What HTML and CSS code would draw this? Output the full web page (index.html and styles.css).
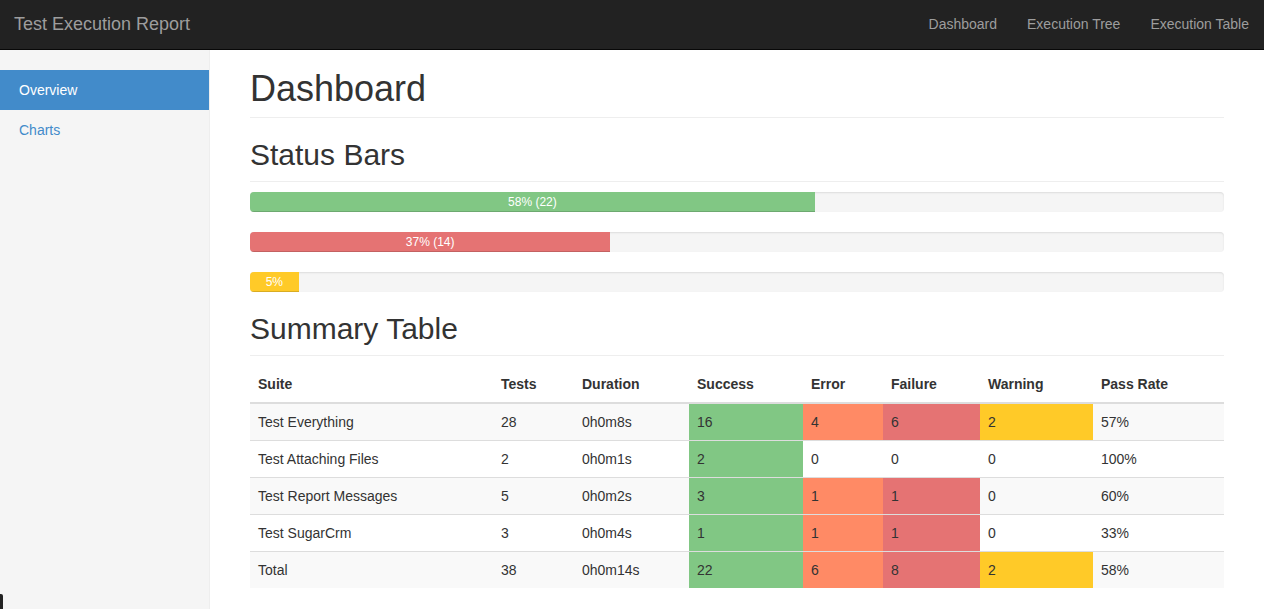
FILE: index.html
```html
<!DOCTYPE html>
<html>
<head>
<meta charset="utf-8">
<title>Test Execution Report</title>
<link rel="stylesheet" href="styles.css">
</head>
<body>
<nav class="navbar">
  <a class="brand" href="#">Test Execution Report</a>
  <ul class="nav-right">
    <li><a href="#">Dashboard</a></li>
    <li><a href="#">Execution Tree</a></li>
    <li><a href="#">Execution Table</a></li>
  </ul>
</nav>
<div class="layout">
  <aside class="sidebar">
    <ul class="side-nav">
      <li class="active"><a href="#">Overview</a></li>
      <li><a href="#">Charts</a></li>
    </ul>
  </aside>
  <main class="main">
    <h1 class="page-header">Dashboard</h1>
    <h2 class="page-header sub">Status Bars</h2>
    <div class="progress"><div class="bar bar-success" style="width:58%">58% (22)</div></div>
    <div class="progress"><div class="bar bar-danger" style="width:37%">37% (14)</div></div>
    <div class="progress"><div class="bar bar-warning" style="width:5%">5%</div></div>
    <h2 class="page-header sub">Summary Table</h2>
    <table class="table">
      <colgroup>
        <col class="c-suite"><col class="c-tests"><col class="c-dur"><col class="c-succ"><col class="c-err"><col class="c-fail"><col class="c-warn"><col class="c-rate">
      </colgroup>
      <thead>
        <tr><th>Suite</th><th>Tests</th><th>Duration</th><th>Success</th><th>Error</th><th>Failure</th><th>Warning</th><th>Pass Rate</th></tr>
      </thead>
      <tbody>
        <tr><td>Test Everything</td><td>28</td><td>0h0m8s</td><td class="success">16</td><td class="error">4</td><td class="failure">6</td><td class="warning">2</td><td>57%</td></tr>
        <tr><td>Test Attaching Files</td><td>2</td><td>0h0m1s</td><td class="success">2</td><td>0</td><td>0</td><td>0</td><td>100%</td></tr>
        <tr><td>Test Report Messages</td><td>5</td><td>0h0m2s</td><td class="success">3</td><td class="error">1</td><td class="failure">1</td><td>0</td><td>60%</td></tr>
        <tr><td>Test SugarCrm</td><td>3</td><td>0h0m4s</td><td class="success">1</td><td class="error">1</td><td class="failure">1</td><td>0</td><td>33%</td></tr>
        <tr><td>Total</td><td>38</td><td>0h0m14s</td><td class="success">22</td><td class="error">6</td><td class="failure">8</td><td class="warning">2</td><td>58%</td></tr>
      </tbody>
    </table>
  </main>
</div>
<div class="corner-mark"></div>
</body>
</html>
```
FILE: styles.css
```css
* { box-sizing: border-box; }
html, body { margin: 0; padding: 0; height: 100%; }
body {
  font-family: "Liberation Sans", Arial, sans-serif;
  font-size: 14px;
  line-height: 1.42857;
  color: #333;
  background: #fff;
  overflow: hidden;
}
a { text-decoration: none; }
ul { list-style: none; margin: 0; padding: 0; }

.navbar {
  height: 50px;
  background: #222;
  border-bottom: 1px solid #080808;
  display: flex;
  justify-content: space-between;
  align-items: stretch;
}
.brand {
  color: #9d9d9d;
  font-size: 18px;
  line-height: 20px;
  padding: 14px 15px 15px 14px;
}
.nav-right { display: flex; }
.nav-right a {
  display: block;
  color: #9d9d9d;
  font-size: 14px;
  line-height: 20px;
  padding: 14px 15px 15px;
}

.layout { display: flex; height: calc(100% - 50px); }
.sidebar {
  width: 210px;
  flex: none;
  background: #f5f5f5;
  border-right: 1px solid #eee;
  padding-top: 20px;
}
.side-nav a {
  display: block;
  padding: 10px 19px;
  line-height: 20px;
  color: #428bca;
}
.side-nav .active a { background: #428bca; color: #fff; }

.main {
  flex: 1;
  padding: 19px 40px 0 40px;
}
.page-header {
  margin: 0 0 20px;
  padding-bottom: 8px;
  border-bottom: 1px solid #eee;
  font-weight: 500;
}
h1.page-header { font-size: 36px; line-height: 1.1; }
h2.page-header { font-size: 30px; line-height: 1.1; margin-bottom: 10px; padding-bottom: 10px; }
.progress + h2.page-header { margin-top: 20px; }

.progress {
  height: 20px;
  margin-bottom: 20px;
  background: #f5f5f5;
  border-radius: 4px;
  overflow: hidden;
  box-shadow: inset 0 1px 2px rgba(0,0,0,.1);
}
.bar {
  height: 100%;
  color: #fff;
  font-size: 12px;
  line-height: 20px;
  text-align: center;
  box-shadow: inset 0 -1px 0 rgba(0,0,0,.15);
}
.bar-success { background: #81c784; }
.bar-danger { background: #e57373; }
.bar-warning { background: #ffca28; }

.table {
  width: 100%;
  border-collapse: collapse;
  border-spacing: 0;
  table-layout: fixed;
}
.c-suite { width: 243px; }
.c-tests { width: 81px; }
.c-dur { width: 115px; }
.c-succ { width: 114px; }
.c-err { width: 80px; }
.c-fail { width: 97px; }
.c-warn { width: 113px; }
.c-rate { width: 131px; }
.table th, .table td {
  padding: 8px;
  line-height: 20px;
  text-align: left;
  vertical-align: top;
}
.table th {
  font-weight: bold;
  border-bottom: 2px solid #ddd;
}
.table td { border-top: 1px solid #ddd; }
.table tbody tr:nth-child(odd) { background: #f9f9f9; }
.table td.success { background: #81c784; }
.table td.error { background: #ff8a65; }
.table td.failure { background: #e57373; }
.table td.warning { background: #ffca28; }

.corner-mark {
  position: absolute;
  left: 0;
  bottom: 0;
  width: 3px;
  height: 15px;
  background: #222;
  border-top-right-radius: 2px;
}
```
